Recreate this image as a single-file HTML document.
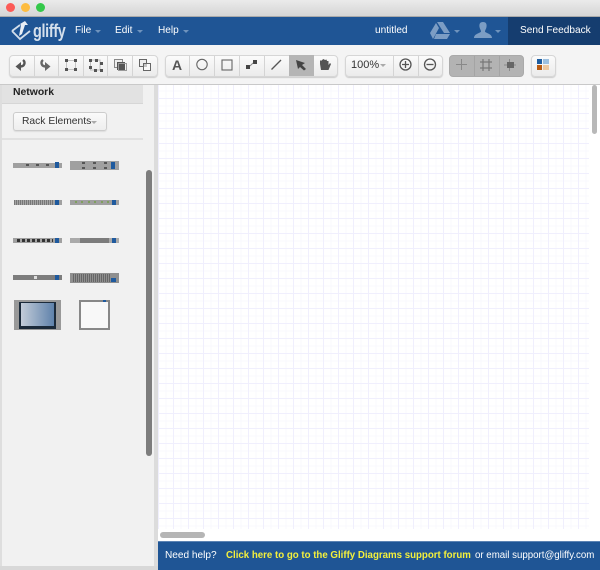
<!DOCTYPE html>
<html><head><meta charset="utf-8"><style>
html,body{margin:0;padding:0}
body{width:600px;height:570px;position:relative;overflow:hidden;background:#f1f1f1;font-family:"Liberation Sans",sans-serif}
div,svg,span{position:absolute}
.t{white-space:nowrap;color:#fff;font-size:10.100px;line-height:14px}
.g{top:55px;height:20px;border:1px solid #d6d6d6;border-radius:4px;background:linear-gradient(#fbfbfb,#ebebeb);box-shadow:0 1px 1px #ccc}
.s{top:56px;width:1px;height:20px;background:#d4d4d4}
.a{width:0;height:0;border-left:3px solid transparent;border-right:3px solid transparent;border-top:3px solid #6f93bd}
.r{background:#a0a0a0}
.b{background:#1f5a9e}
.d{background:#555;width:3px;height:2px}
.l{background:#7fa05f;width:2px;height:2px}
</style></head><body>
<div style="left:0;top:0;width:600px;height:17px;background:linear-gradient(#ebebeb,#d5d5d5);border-bottom:1px solid #aaa;box-sizing:border-box"></div>
<div style="left:6px;top:3px;width:9px;height:9px;border-radius:50%;background:#fc5b57"></div>
<div style="left:21px;top:3px;width:9px;height:9px;border-radius:50%;background:#fdbc40"></div>
<div style="left:36px;top:3px;width:9px;height:9px;border-radius:50%;background:#34c84a"></div>

<div style="left:0;top:17px;width:600px;height:28px;background:#1f5595"></div>
<div style="left:508px;top:17px;width:92px;height:28px;background:#153d6f"></div>
<svg style="left:10px;top:19px" width="24" height="22" viewBox="0 0 24 22"><path d="M2 12L10 6M2 12L10 20L20 12" fill="none" stroke="#d3dfec" stroke-width="1.800"/><path d="M9 17L11 6L10 5L15 2L18 6L15 6L12 15Z" fill="#e8eef5"/></svg>
<div class="t" style="left:33px;top:20px;font-size:18px;line-height:22px;font-weight:bold;color:#d5e0ec;letter-spacing:-.4px;transform:scaleX(.8);transform-origin:0 0">gliffy</div>
<div class="t" style="left:75px;top:24px">File</div><div class="a" style="left:95px;top:30px"></div>
<div class="t" style="left:115px;top:24px">Edit</div><div class="a" style="left:137px;top:30px"></div>
<div class="t" style="left:158px;top:24px">Help</div><div class="a" style="left:183px;top:30px"></div>
<div class="t" style="left:375px;top:24px">untitled</div>
<svg style="left:430px;top:22px" width="20" height="17" viewBox="0 0 20 17"><path d="M7 0H13L20 11H14ZM6 1L9 6L3 17L0 11ZM6 12H20L17 17H4Z" fill="#7c9dc4"/></svg>
<div class="a" style="left:454px;top:30px"></div>
<svg style="left:474px;top:22px" width="18" height="16" viewBox="0 0 18 16"><path d="M9 0C12 0 13 2 12.500 5C12.200 7 11 8 11 9.500C11 11 18 11.500 18 16H0C0 11.500 7 11 7 9.500C7 8 5.800 7 5.500 5C5 2 6 0 9 0Z" fill="#7c9dc4"/></svg>
<div class="a" style="left:495px;top:30px"></div>
<div class="t" style="left:520px;top:24px">Send Feedback</div>

<div style="left:0;top:45px;width:600px;height:39px;background:#f4f4f4;border-bottom:1px solid #c9c9c9"></div>

<div class="g" style="left:9px;width:147px"></div>
<div class="s" style="left:34px"></div><div class="s" style="left:58px"></div><div class="s" style="left:83px"></div><div class="s" style="left:107px"></div><div class="s" style="left:132px"></div>
<div class="g" style="left:165px;width:171px"></div>
<div class="s" style="left:189px"></div><div class="s" style="left:214px"></div><div class="s" style="left:239px"></div><div class="s" style="left:264px"></div>
<div style="left:289px;top:55px;width:25px;height:21px;background:#b5b5b5"></div>
<div class="g" style="left:345px;width:96px"></div>
<div class="s" style="left:393px"></div><div class="s" style="left:418px"></div>
<div style="left:449px;top:55px;width:73px;height:20px;border:1px solid #aaa;border-radius:4px;background:#b3b3b3"></div>
<div class="s" style="left:474px;background:#a4a4a4"></div><div class="s" style="left:499px;background:#a4a4a4"></div>
<div class="g" style="left:531px;width:23px"></div>

<svg style="left:0;top:45px" width="600" height="39" viewBox="0 45 600 39">
<path d="M23 60C25.500 62 25 66.500 20 66.500H18" fill="none" stroke="#555" stroke-width="2.400"/><path d="M21 62L15.500 66.500L21 71Z" fill="#555"/>
<path d="M43 60C40.500 62 41 66.500 46 66.500H48" fill="none" stroke="#666" stroke-width="2.400"/><path d="M45 62L50.500 66.500L45 71Z" fill="#666"/>
<path d="M67 60.500H75M66.500 61V69M75.500 61V69M67 69.500H75" stroke="#c4c4c4" fill="none"/>
<g fill="#555"><rect x="65" y="59" width="3" height="3"/><rect x="74" y="59" width="3" height="3"/><rect x="65" y="68" width="3" height="3"/><rect x="74" y="68" width="3" height="3"/></g>
<path d="M90.500 60H100V70H90.500Z" stroke="#bbb" fill="none"/>
<g fill="#555"><rect x="89" y="59" width="3" height="3"/><rect x="95" y="59" width="3" height="3"/><rect x="100" y="62" width="3" height="3"/><rect x="89" y="66" width="3" height="3"/><rect x="94" y="69" width="3" height="3"/><rect x="100" y="69" width="3" height="3"/></g>
<rect x="114.500" y="59.500" width="8" height="8" fill="#eee" stroke="#888"/><rect x="117" y="62" width="8" height="8" fill="#555"/><rect x="118.500" y="63.500" width="8" height="7" fill="none" stroke="#999"/>
<rect x="139.500" y="59.500" width="7" height="7" fill="#eee" stroke="#666"/><rect x="143" y="63" width="4" height="4" fill="#888"/><rect x="143.500" y="63.500" width="7" height="7" fill="#fff" fill-opacity=".5" stroke="#666"/>
<circle cx="202" cy="64.500" r="5.200" fill="none" stroke="#666" stroke-width="1.100"/>
<rect x="222" y="60" width="10" height="10" fill="none" stroke="#666" stroke-width="1.100"/>
<rect x="246" y="65" width="4" height="4" fill="#444"/><rect x="253" y="60" width="4" height="4" fill="#444"/><path d="M250 66L253 63" stroke="#888"/>
<path d="M271.500 69.500L281 60" stroke="#555" stroke-width="1.300"/>
<path d="M296 60L305 63L302 65L306 69L304 70.500L300 67L298 69Z" fill="#444"/>
<path d="M321 70L320 64V61L321 60L322 61V60L323.500 59L325 60L326.500 59.500L327 61H328.500V65L330 63L331 64L328.500 70Z" fill="#555"/>
<circle cx="405.500" cy="64.500" r="5.500" fill="none" stroke="#555" stroke-width="1.300"/><path d="M402 64.500H409M405.500 61V68" stroke="#555" stroke-width="1.300"/>
<circle cx="430" cy="64.500" r="5.500" fill="none" stroke="#555" stroke-width="1.300"/><path d="M426.500 64.500H433.500" stroke="#555" stroke-width="1.300"/>
<path d="M461.500 59V70M456 64.500H467" stroke="#888"/>
<path d="M483 59V71M489 59V71M480 62H492M480 68H492" stroke="#777" stroke-width="1.200"/>
<path d="M509.500 59V71M504 65H516" stroke="#8a8a8a"/><rect x="507" y="62" width="7" height="6" fill="#666"/>
<rect x="537" y="59" width="5" height="5" fill="#1e5da0"/><rect x="543" y="59" width="6" height="5" fill="#9cc0e0"/><rect x="537" y="65" width="5" height="5" fill="#b85b12"/><rect x="543" y="65" width="6" height="5" fill="#edc8a0"/>
</svg>
<div class="t" style="left:172px;top:57px;color:#555;font-size:14px;line-height:16px;font-weight:bold">A</div>
<div class="t" style="left:351px;top:58px;color:#333;font-size:11px">100%</div><div class="a" style="left:380px;top:64px;border-top-color:#aaa"></div>

<!-- sidebar -->
<div style="left:2px;top:85px;width:141px;height:19px;background:#e2e2e2;border-bottom:1px solid #d6d6d6;box-sizing:border-box"></div>
<div class="t" style="left:13px;top:86px;color:#222;font-weight:bold;font-size:10.400px">Network</div>
<div style="left:13px;top:112px;width:92px;height:17px;border:1px solid #ccc;border-radius:3px;background:linear-gradient(#fafafa,#eeeeee);box-shadow:0 1px 1px #ddd"></div>
<div class="t" style="left:22px;top:114px;color:#333;font-size:10.300px;line-height:15px">Rack Elements</div><div class="a" style="left:91px;top:121px;border-top-color:#aaa"></div>
<div style="left:2px;top:138px;width:141px;height:2px;background:#e1e1e1"></div>

<div class="r" style="left:13px;top:163px;width:49px;height:5px"></div><div class="b" style="left:55px;top:162px;width:4px;height:6px"></div>
<div class="d" style="left:26px;top:164px"></div><div class="d" style="left:36px;top:164px"></div><div class="d" style="left:46px;top:164px"></div>
<div class="r" style="left:70px;top:161px;width:49px;height:9px"></div><div class="b" style="left:111px;top:162px;width:4px;height:7px"></div>
<div class="d" style="left:82px;top:162px"></div><div class="d" style="left:93px;top:162px"></div><div class="d" style="left:104px;top:162px"></div>
<div class="d" style="left:82px;top:167px"></div><div class="d" style="left:93px;top:167px"></div><div class="d" style="left:104px;top:167px"></div>
<div style="left:14px;top:200px;width:40px;height:5px;background:repeating-linear-gradient(90deg,#777 0 1px,#a5a5a5 1px 2px)"></div><div class="r" style="left:54px;top:200px;width:8px;height:5px"></div><div class="b" style="left:55px;top:200px;width:4px;height:5px"></div>
<div class="r" style="left:70px;top:200px;width:49px;height:5px"></div><div class="b" style="left:112px;top:200px;width:4px;height:5px"></div>
<div class="l" style="left:75px;top:201px"></div><div class="l" style="left:81px;top:201px"></div><div class="l" style="left:88px;top:201px"></div><div class="l" style="left:94px;top:201px"></div><div class="l" style="left:101px;top:201px"></div><div class="l" style="left:107px;top:201px"></div>
<div class="r" style="left:13px;top:238px;width:49px;height:5px"></div><div class="b" style="left:55px;top:238px;width:4px;height:5px"></div>
<div style="left:17px;top:239px;width:36px;height:3px;background:repeating-linear-gradient(90deg,#333 0 3px,#a5a5a5 3px 5px)"></div>
<div style="left:70px;top:238px;width:49px;height:5px;background:linear-gradient(90deg,#aaa 20%,#7c7c7c 20% 80%,#aaa 80%)"></div><div class="b" style="left:112px;top:238px;width:4px;height:5px"></div>
<div style="left:13px;top:275px;width:49px;height:5px;background:#7d7d7d"></div><div class="b" style="left:55px;top:275px;width:4px;height:5px"></div><div style="left:34px;top:276px;width:3px;height:3px;background:#ddd"></div>
<div style="left:70px;top:273px;width:49px;height:10px;background:#8f8f8f"></div><div style="left:73px;top:274px;width:37px;height:8px;background:repeating-linear-gradient(90deg,#666 0 1px,#8f8f8f 1px 2px)"></div><div class="b" style="left:111px;top:278px;width:5px;height:4px"></div>
<div style="left:14px;top:300px;width:47px;height:30px;background:#999"></div>
<div style="left:19px;top:302px;width:37px;height:27px;background:#1b2a3a"></div>
<div style="left:21px;top:303px;width:33px;height:23px;background:linear-gradient(90deg,#c3ccd8,#5f82ab)"></div>
<div style="left:79px;top:300px;width:27px;height:26px;border:2px solid #888;background:#f8f8f8"></div><div class="b" style="left:103px;top:300px;width:3px;height:2px"></div>

<div style="left:146px;top:170px;width:6px;height:286px;background:#7d7d7d;border-radius:3px"></div>
<div style="left:154px;top:85px;width:4px;height:485px;background:#dcdcdc"></div>
<div style="left:0;top:85px;width:2px;height:485px;background:#dedede"></div>
<div style="left:0;top:566px;width:158px;height:4px;background:#d8d8d8"></div>

<!-- canvas -->
<div style="left:158px;top:85px;width:442px;height:456px;background:#fff"></div>
<div style="left:158px;top:85px;width:431px;height:444px;background-color:#fff;background-image:linear-gradient(90deg,#f0effd 1px,transparent 1px),linear-gradient(#f0effd 1px,transparent 1px),linear-gradient(90deg,#f9f9fe 1px,transparent 1px),linear-gradient(#f9f9fe 1px,transparent 1px);background-size:15px 15px,15px 15px,7.500px 7.500px,7.500px 7.500px;background-position:0 -2px,0 -2px,0 -2px,0 -2px"></div>
<div style="left:592px;top:85px;width:5px;height:49px;background:#b8b8b8;border-radius:3px"></div>
<div style="left:160px;top:532px;width:45px;height:6px;background:#b5b5b5;border-radius:3px"></div>

<div style="left:158px;top:541px;width:442px;height:29px;background:#1f5595;border-top:1px solid #5c83b3;box-sizing:border-box"></div>
<div class="t" style="left:165px;top:549px">Need help?</div>
<div class="t" style="left:226px;top:549px;color:#f4f03c;font-weight:bold;font-size:9.700px">Click here to go to the Gliffy Diagrams support forum</div>
<div class="t" style="left:475px;top:549px;font-size:9.700px">or email support@gliffy.com</div>
</body></html>
